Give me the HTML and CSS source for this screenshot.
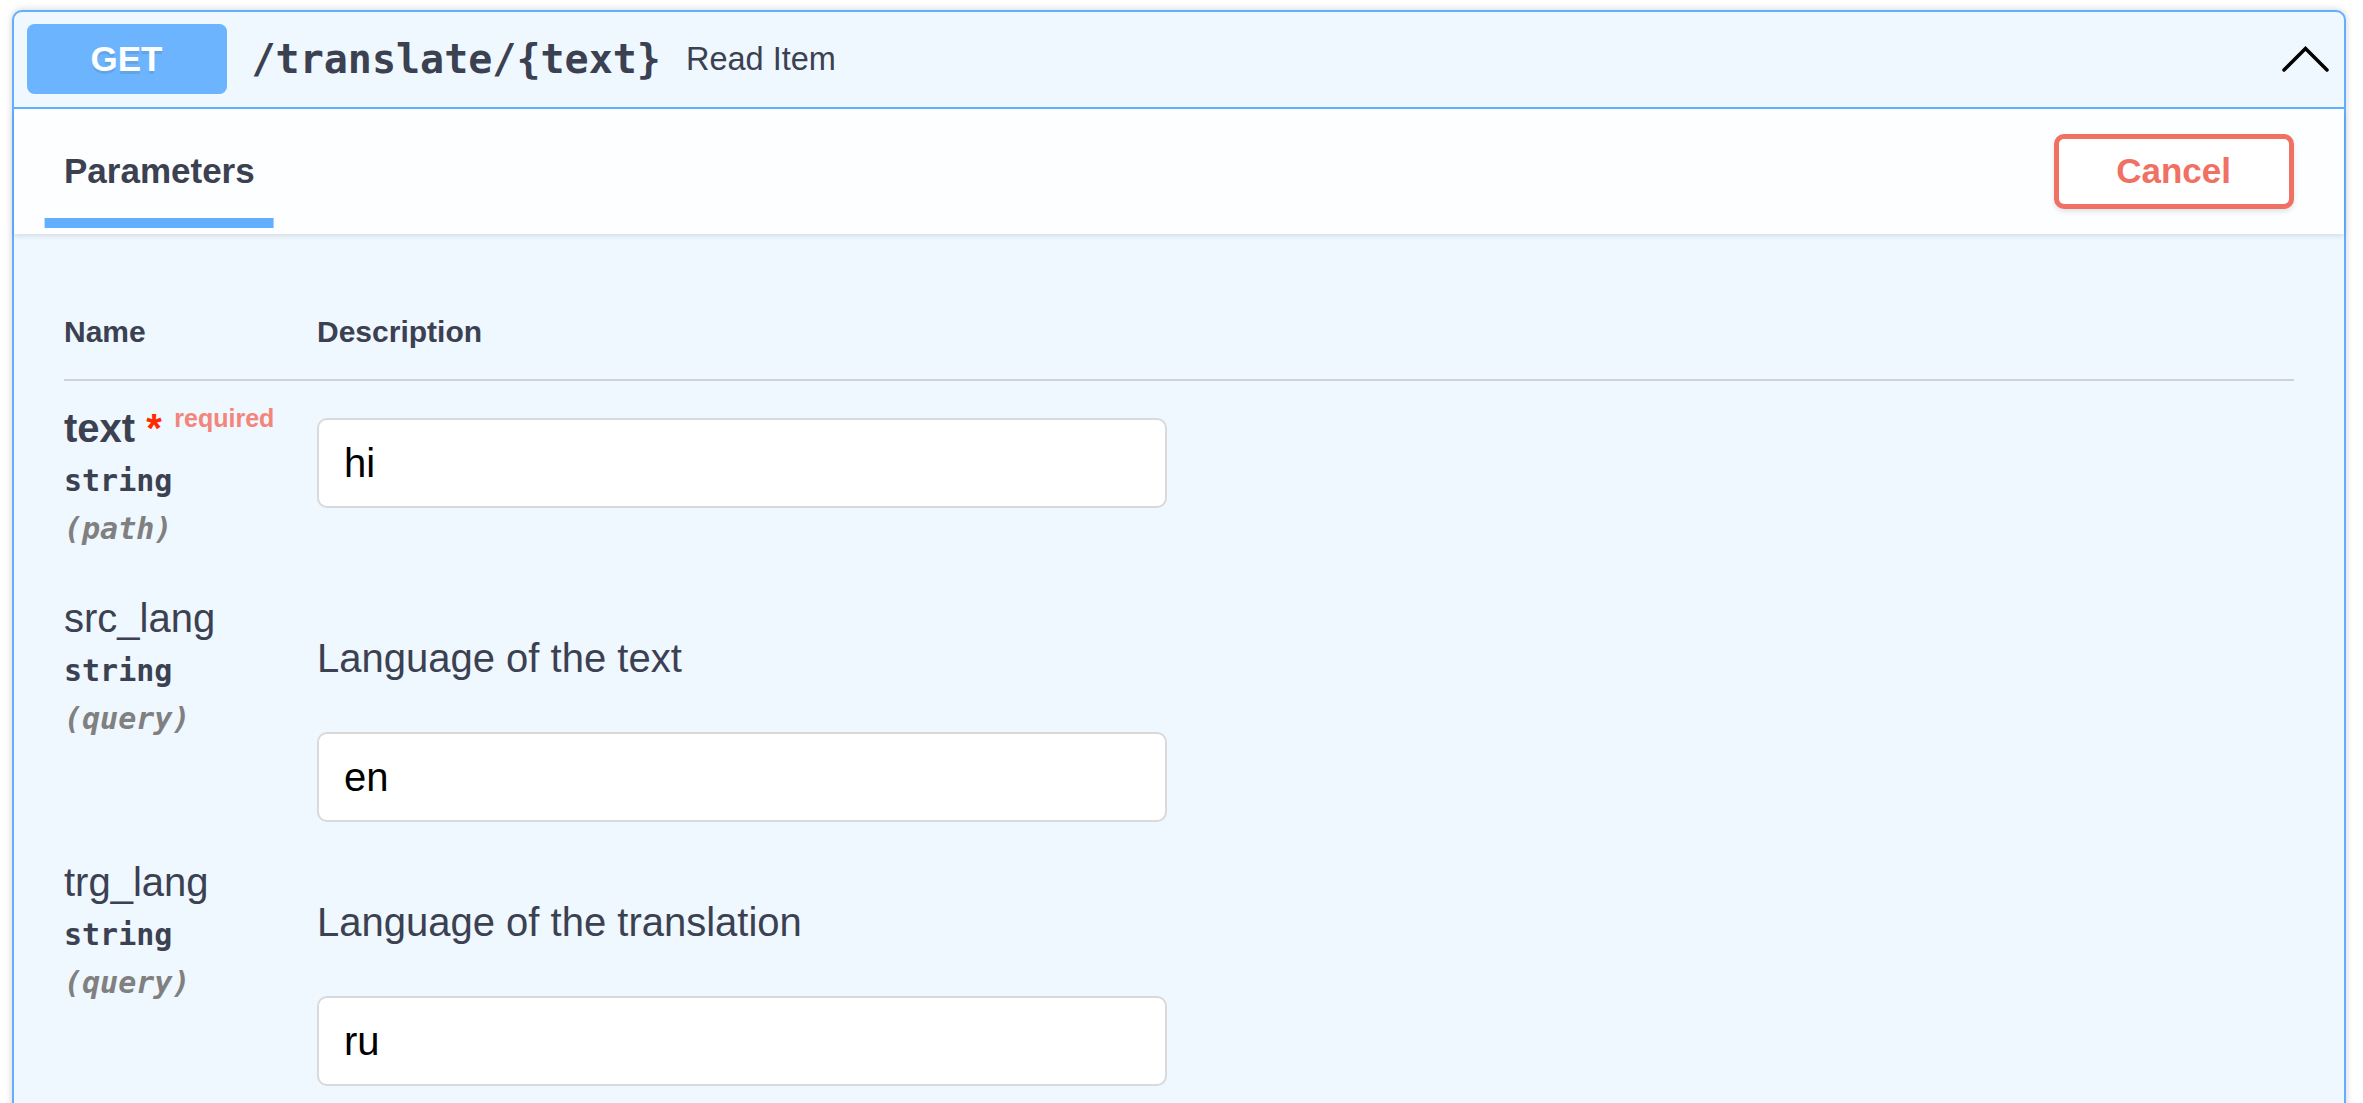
FILE: index.html
```html
<!DOCTYPE html>
<html>
<head>
<meta charset="utf-8">
<title>Swagger UI</title>
<link rel="stylesheet" href="styles.css">
</head>
<body>
<div class="page">
  <div class="opblock">
    <div class="summary">
      <span class="method">GET</span>
      <span class="path">/translate/{text}</span>
      <span class="summary-desc">Read Item</span>
      <svg class="arrow" width="50" height="50" viewBox="0 0 50 50" aria-hidden="true"><polyline points="3,36 24.5,14.5 46,36" fill="none" stroke="#000" stroke-width="3.5" stroke-linecap="round" stroke-linejoin="miter"/></svg>
    </div>
    <div class="section-header">
      <div class="tab"><h4><span class="tab-label">Parameters</span></h4></div>
      <button class="btn-cancel">Cancel</button>
    </div>
    <div class="table-container">
      <table class="parameters">
        <thead>
          <tr><th class="col-name">Name</th><th class="col-desc">Description</th></tr>
        </thead>
        <tbody>
          <tr>
            <td class="col-name">
              <div class="param-name required">text<span class="star">&nbsp;*</span><span class="req-label">required</span></div>
              <div class="param-type">string</div>
              <div class="param-in">(path)</div>
            </td>
            <td class="col-desc"><div class="desc"><input class="field" type="text" value="hi"></div></td>
          </tr>
          <tr>
            <td class="col-name">
              <div class="param-name">src_lang</div>
              <div class="param-type">string</div>
              <div class="param-in">(query)</div>
            </td>
            <td class="col-desc"><div class="desc"><p class="markdown">Language of the text</p><input class="field" type="text" value="en"></div></td>
          </tr>
          <tr>
            <td class="col-name">
              <div class="param-name">trg_lang</div>
              <div class="param-type">string</div>
              <div class="param-in">(query)</div>
            </td>
            <td class="col-desc"><div class="desc"><p class="markdown">Language of the translation</p><input class="field" type="text" value="ru"></div></td>
          </tr>
        </tbody>
      </table>
    </div>
  </div>
</div>
</body>
</html>
```

FILE: styles.css
```css
html, body {
  margin: 0;
  padding: 0;
  background: #ffffff;
}

.page {
  padding: 9.5px 17.5px 0 12px;
  font-family: "Liberation Sans", Arial, sans-serif;
  color: #3b4151;
}

.opblock {
  border: 2.5px solid #61affe;
  border-radius: 10px;
  background: #eff7ff;
  box-shadow: 0 0 7.5px rgba(0, 0, 0, 0.19);
}

.summary {
  display: flex;
  align-items: center;
  padding: 12.5px;
  border-bottom: 2.5px solid #61affe;
}

.method {
  flex: none;
  width: 200px;
  padding: 15px 0;
  line-height: 40px;
  background: #61affe;
  opacity: 0.92;
  border-radius: 7.5px;
  color: #ffffff;
  font-family: "Liberation Sans", Arial, sans-serif;
  font-size: 35px;
  font-weight: 700;
  text-align: center;
  text-shadow: 0 2.5px 0 rgba(0, 0, 0, 0.1);
}

.path {
  padding: 0 25px;
  font-family: "DejaVu Sans Mono", monospace;
  font-size: 40px;
  font-weight: 700;
  color: #3b4151;
}

.summary-desc {
  flex: 1 1 auto;
  font-family: "Liberation Sans", Arial, sans-serif;
  font-size: 32.5px;
  color: #3b4151;
}

.arrow {
  flex: none;
  display: block;
}

.section-header {
  display: flex;
  align-items: center;
  box-sizing: border-box;
  min-height: 125px;
  padding: 20px 50px;
  background: rgba(255, 255, 255, 0.8);
  box-shadow: 0 2.5px 5px rgba(0, 0, 0, 0.1);
}

.tab {
  flex: 1;
}

.tab h4 {
  margin: 0;
  font-size: 35px;
  font-weight: 700;
  color: #3b4151;
}

.tab-label {
  position: relative;
}

.tab-label::after {
  content: "";
  position: absolute;
  left: 50%;
  bottom: -37.5px;
  width: 120%;
  height: 10px;
  background: #61affe;
  transform: translateX(-50%);
}

.btn-cancel {
  padding: 12.5px 57.5px;
  border: 5px solid #f07064;
  border-radius: 10px;
  background: #ffffff;
  box-shadow: 0 2.5px 5px rgba(0, 0, 0, 0.1);
  color: #f07064;
  font-family: "Liberation Sans", Arial, sans-serif;
  font-size: 35px;
  font-weight: 700;
  line-height: normal;
}

.table-container {
  padding: 51px 50px 50px 50px;
}

.parameters {
  width: 100%;
  border-collapse: collapse;
  border-spacing: 0;
  table-layout: fixed;
}

.parameters th {
  padding: 30px 0;
  border-bottom: 2.5px solid #cdd2db;
  font-family: "Liberation Sans", Arial, sans-serif;
  font-size: 30px;
  font-weight: 700;
  color: #3b4151;
  text-align: left;
}

.parameters th.col-name {
  width: 253px;
}

.parameters td {
  padding: 25px 0 0;
  vertical-align: top;
}

.parameters td.col-name {
  padding: 25px 0;
}

.param-name {
  font-size: 40px;
  font-weight: 400;
  color: #3b4151;
  white-space: nowrap;
}

.param-name.required {
  font-weight: 700;
}

.star {
  color: #ff2a00;
}

.req-label {
  position: relative;
  top: -15px;
  padding: 12.5px;
  font-size: 25px;
  color: #f3857b;
}

.param-type {
  padding: 12.5px 0;
  font-family: "DejaVu Sans Mono", monospace;
  font-size: 30px;
  font-weight: 700;
  color: #3b4151;
}

.param-in {
  font-family: "DejaVu Sans Mono", monospace;
  font-size: 30px;
  font-weight: 700;
  font-style: italic;
  color: #808080;
}

.desc {
  display: flex;
  flex-direction: column;
  align-items: flex-start;
}

.markdown {
  margin: 40px 0 39px;
  font-size: 40px;
  color: #3b4151;
}

.field {
  box-sizing: border-box;
  width: 850px;
  height: 90px;
  margin: 12.5px 0;
  padding: 20px 25px;
  border: 2.5px solid #d9d9d9;
  border-radius: 10px;
  background: #ffffff;
  color: #000000;
  font-family: "Liberation Sans", Arial, sans-serif;
  font-size: 40px;
  outline: none;
}
```
